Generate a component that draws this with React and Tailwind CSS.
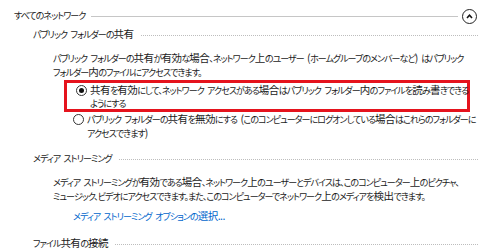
import React from 'react';

// kana runs are set a bit smaller and tighter, like Meiryo UI's narrow kana
const RUN = /([\u3040-\u30ff\u3001\u3002]+| )/;
const J = ({ t }) =>
  t.split(RUN).map((s, i) => {
    if (i % 2 === 0) return <React.Fragment key={i}>{s}</React.Fragment>;
    if (s === ' ')
      return (
        <span key={i} className="pr-[1.5px]">
          {' '}
        </span>
      );
    return (
      <span key={i} className="text-[9px] leading-none tracking-[-0.95px]">
        {s}
      </span>
    );
  });

const Radio = ({ checked }) => (
  <span className="mt-[2px] flex h-[11px] w-[11px] shrink-0 items-center justify-center rounded-full border border-[#333] bg-white">
    {checked && <span className="h-[5px] w-[5px] rounded-full bg-[#111]" />}
  </span>
);

const SubHeading = ({ t }) => (
  <div className="flex h-[14px] items-center pl-[33px] pr-[20px]">
    <span className="whitespace-nowrap">
      <J t={t} />
    </span>
    <span className="ml-[7px] mt-[2px] flex-1 border-t border-dotted border-[#bdbdbd]" />
  </div>
);

const App = () => {
  return (
    <div className="h-[250px] w-[498px] overflow-hidden bg-white font-['Noto_Sans_CJK_JP','Noto_Sans',sans-serif] text-[10.5px] leading-[14px] tracking-[-0.5px] text-[#1b1b1b] [font-feature-settings:'palt']">
      <div className="flex h-[22px] items-center pl-[14px] pr-[21px] pt-[8px]">
        <span className="whitespace-nowrap">
          <J t="すべてのネットワーク" />
        </span>
        <span className="ml-[6px] mt-[2px] flex-1 border-t border-[#c6c6c6]" />
        <span className="ml-[4px] mt-[2px] flex h-[15px] w-[15px] items-center justify-center rounded-full border-[1.5px] border-[#222]">
          <svg width="7" height="5" viewBox="0 0 7 5">
            <path d="M1 4 L3.5 1.3 L6 4" fill="none" stroke="#111" strokeWidth="1.6" />
          </svg>
        </span>
      </div>

      <div className="h-[5px]" />
      <SubHeading t="パブリック フォルダーの共有" />

      <p className="mt-[10px] whitespace-nowrap pl-[53px]">
        <J t="パブリック フォルダーの共有が有効な場合、ネットワーク上のユーザー (ホームグループのメンバーなど) はパブリック" />
        <br />
        <J t="フォルダー内のファイルにアクセスできます。" />
      </p>

      <div className="ml-[64px] mt-[1px] w-[406px] border-[3px] border-[#e5131d] pl-[9px]">
        <label className="flex gap-[3px] whitespace-nowrap leading-[13px]">
          <Radio checked />
          <span>
            <J t="共有を有効にして、ネットワーク アクセスがある場合はパブリック フォルダー内のファイルを読み書きできる" />
            <br />
            <J t="ようにする" />
          </span>
        </label>
      </div>

      <label className="ml-[73px] flex gap-[3px] whitespace-nowrap">
        <Radio />
        <span>
          <J t="パブリック フォルダーの共有を無効にする (このコンピューターにログオンしている場合はこれらのフォルダーに" />
          <br />
          <J t="アクセスできます)" />
        </span>
      </label>

      <div className="h-[11px]" />
      <SubHeading t="メディア ストリーミング" />

      <p className="mt-[10px] whitespace-nowrap pl-[53px]">
        <J t="メディア ストリーミングが有効である場合、ネットワーク上のユーザーとデバイスは、このコンピューター上のピクチャ、" />
        <br />
        <J t="ミュージック、ビデオにアクセスできます。また、このコンピューターでネットワーク上のメディアを検出できます。" />
      </p>

      <a className="mt-[6px] block pl-[73px] text-[#0066cc]">
        <J t="メディア ストリーミング オプションの選択..." />
      </a>

      <div className="h-[13px]" />
      <SubHeading t="ファイル共有の接続" />
    </div>
  );
};

export default App;
